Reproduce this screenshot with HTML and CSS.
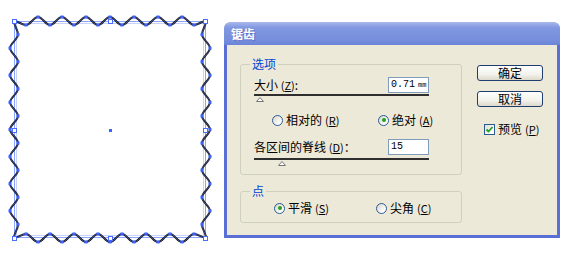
FILE: index.html
```html
<!DOCTYPE html>
<html lang="zh-CN">
<head>
    <meta charset="UTF-8">
    <title>锯齿</title>
    <link rel="stylesheet" href="styles.css">
</head>
<body>

    <svg class="canvas" width="220" height="256" viewBox="0 0 220 256">
        <defs>
            <marker id="anchor" markerWidth="4" markerHeight="4" refX="2" refY="2" markerUnits="userSpaceOnUse">
                <rect x="0.5" y="0.5" width="3" height="3" fill="#3b62ff"/>
            </marker>
            <path id="wave"
                d="M14 21 c4.5 0 7.5 4 12 4 s7.5 -8 12 -8 s7.5 8 12 8 s7.5 -8 12 -8 s7.5 8 12 8 s7.5 -8 12 -8 s7.5 8 12 8 s7.5 -8 12 -8 s7.5 8 12 8 s7.5 -8 12 -8 s7.5 8 12 8 s7.5 -8 12 -8 s7.5 8 12 8 s7.5 -8 12 -8 s7.5 8 12 8 s7.5 -4 12 -4
                   c0 5 -4 8.56 -4 13.56 s8 8.56 8 13.56 s-8 8.56 -8 13.56 s8 8.56 8 13.56 s-8 8.56 -8 13.56 s8 8.56 8 13.56 s-8 8.56 -8 13.56 s8 8.56 8 13.56 s-8 8.56 -8 13.56 s8 8.56 8 13.56 s-8 8.56 -8 13.56 s8 8.56 8 13.56 s-8 8.56 -8 13.56 s8 8.56 8 13.56 s-8 8.56 -8 13.56 s4 8.56 4 13.56
                   c-4.5 0 -7.5 -4 -12 -4 s-7.5 8 -12 8 s-7.5 -8 -12 -8 s-7.5 8 -12 8 s-7.5 -8 -12 -8 s-7.5 8 -12 8 s-7.5 -8 -12 -8 s-7.5 8 -12 8 s-7.5 -8 -12 -8 s-7.5 8 -12 8 s-7.5 -8 -12 -8 s-7.5 8 -12 8 s-7.5 -8 -12 -8 s-7.5 8 -12 8 s-7.5 -8 -12 -8 s-7.5 4 -12 4
                   c0 -5 4 -8.56 4 -13.56 s-8 -8.56 -8 -13.56 s8 -8.56 8 -13.56 s-8 -8.56 -8 -13.56 s8 -8.56 8 -13.56 s-8 -8.56 -8 -13.56 s8 -8.56 8 -13.56 s-8 -8.56 -8 -13.56 s8 -8.56 8 -13.56 s-8 -8.56 -8 -13.56 s8 -8.56 8 -13.56 s-8 -8.56 -8 -13.56 s8 -8.56 8 -13.56 s-8 -8.56 -8 -13.56 s8 -8.56 8 -13.56 s-4 -8.56 -4 -13.56 Z"/>
        </defs>
        <rect x="14.5" y="21.5" width="191" height="216" fill="none" stroke="#8aa4ff"/>
        <rect x="16.5" y="23.5" width="187" height="212" fill="none" stroke="#c8d4ff"/>
        <use href="#wave" fill="none" stroke="#1a1a1a" stroke-width="2"/>
        <use href="#wave" fill="none" stroke="#5577ff" stroke-width="0.5"
            marker-start="url(#anchor)" marker-mid="url(#anchor)"/>
        <g fill="#fff" stroke="#4a6dff">
            <rect x="12.5" y="19.5" width="4" height="4"/>
            <rect x="108.5" y="19.5" width="4" height="4"/>
            <rect x="203.5" y="19.5" width="4" height="4"/>
            <rect x="12.5" y="128.5" width="4" height="4"/>
            <rect x="203.5" y="128.5" width="4" height="4"/>
            <rect x="12.5" y="236.5" width="4" height="4"/>
            <rect x="108.5" y="236.5" width="4" height="4"/>
            <rect x="203.5" y="236.5" width="4" height="4"/>
        </g>
        <rect x="109" y="129" width="3" height="3" fill="#3b62ff"/>
    </svg>

    <div class="dialog">
        <div class="titlebar">锯齿</div>
        <div class="dialog-body">
            <div class="groups">
                <fieldset class="group options">
                    <legend>选项</legend>
                    <div class="field">
                        <span>大小 <span class="key">(<u>Z</u>)</span>:</span>
                        <span class="box">0.71<small>mm</small></span>
                    </div>
                    <div class="slider">
                        <svg class="thumb" width="8" height="5"><polygon points="0.5,4.5 4,0.5 7.5,4.5" fill="#fff" stroke="#777"/></svg>
                    </div>
                    <div class="radios">
                        <span class="radio"><span class="dot"></span>相对的 <span class="key">(<u>R</u>)</span></span>
                        <span class="radio"><span class="dot on"></span>绝对 <span class="key">(<u>A</u>)</span></span>
                    </div>
                    <div class="field second">
                        <span>各区间的脊线 <span class="key">(<u>D</u>)</span>：</span>
                        <span class="box">15</span>
                    </div>
                    <div class="slider second">
                        <svg class="thumb far" width="8" height="5"><polygon points="0.5,4.5 4,0.5 7.5,4.5" fill="#fff" stroke="#777"/></svg>
                    </div>
                </fieldset>

                <fieldset class="group points">
                    <legend>点</legend>
                    <div class="radios">
                        <span class="radio"><span class="dot on"></span>平滑 <span class="key">(<u>S</u>)</span></span>
                        <span class="radio"><span class="dot"></span>尖角 <span class="key">(<u>C</u>)</span></span>
                    </div>
                </fieldset>
            </div>

            <div class="actions">
                <button class="btn">确定</button>
                <button class="btn">取消</button>
                <label class="check">
                    <span class="checkbox">
                        <svg width="9" height="9"><path d="M1.5 4.5 L3.5 6.5 L7.5 2" fill="none" stroke="#21a121" stroke-width="1.8"/></svg>
                    </span>
                    预览 <span class="key">(<u>P</u>)</span>
                </label>
            </div>
        </div>
    </div>

</body>
</html>
```

FILE: styles.css
```css
body {
    margin: 0;
    display: flex;
    align-items: flex-start;
    background-color: #fff;
    color: #000;
    font-family: "Noto Sans CJK SC", "Liberation Sans", sans-serif;
    font-size: 12px;
}

.canvas {
    display: block;
    flex: none;
}

/* dialog window */

.dialog {
    margin: 22px 0 0 4px;
    width: 336px;
    height: 216px;
    display: flex;
    flex-direction: column;
}

.titlebar {
    height: 23px;
    padding-left: 7px;
    border-radius: 6px 6px 0 0;
    background: linear-gradient(#a9b8ec, #8197e0 25%, #778fdc 75%, #6b84d8);
    color: #fff;
    font-weight: bold;
    line-height: 23px;
    text-shadow: 1px 1px 0 #5b6fc9;
    box-sizing: border-box;
}

.dialog-body {
    flex: 1;
    display: flex;
    padding: 12px 0 0 13px;
    background-color: #ece9d8;
    border: 3px solid #5a6fd6;
    border-top: 0;
}

/* group boxes */

.groups {
    width: 222px;
}

.group {
    margin: 0;
    min-width: 0;
    padding: 6px 32px 6px 13px;
    border: 1px solid #d0d0bf;
    border-radius: 3px;
    line-height: 14px;
}

.group legend {
    margin-left: -4px;
    padding: 0 2px;
    color: #0046d5;
    line-height: 14px;
}

.group.points {
    margin-top: 9px;
    padding: 3px 0 7px 13px;
}

.field {
    display: flex;
    justify-content: space-between;
    align-items: center;
    height: 16px;
    white-space: nowrap;
}

.field.second {
    margin-top: 12px;
}

.key {
    font-size: 11px;
}

.box {
    width: 41px;
    height: 16px;
    padding-left: 2px;
    border: 1px solid #7f9db9;
    background-color: #fff;
    font-family: "Liberation Mono", monospace;
    font-size: 10px;
    line-height: 14px;
    white-space: nowrap;
    overflow: hidden;
    box-sizing: border-box;
}

.box small {
    margin-left: 3px;
    font-size: 7px;
}

.slider {
    margin-top: 1px;
    height: 8px;
    border-top: 2px solid #2e2e2e;
}

.slider.second {
    margin-top: 3px;
}

.thumb {
    display: block;
    margin: 1px 0 0 2px;
}

.thumb.far {
    margin-left: 24px;
}

.radios {
    display: grid;
    grid-template-columns: 106px max-content;
    margin-top: 9px;
    padding-left: 18px;
    white-space: nowrap;
}

.points .radios {
    grid-template-columns: 102px max-content;
    margin-top: 0;
    padding-left: 20px;
}

.radio {
    display: inline-flex;
    align-items: center;
    gap: 3px;
}

.dot {
    width: 11px;
    height: 11px;
    border: 1px solid #2c5b95;
    border-radius: 50%;
    background: linear-gradient(135deg, #d8d5c6, #fff 80%);
    box-sizing: border-box;
    display: flex;
    align-items: center;
    justify-content: center;
}

.dot.on::after {
    content: "";
    width: 4px;
    height: 4px;
    border-radius: 50%;
    background-color: #21a121;
}

/* buttons column */

.actions {
    margin-left: 15px;
    padding-top: 8px;
    display: flex;
    flex-direction: column;
    align-items: flex-start;
}

.btn {
    width: 66px;
    height: 16px;
    margin: 0 0 10px 0;
    padding: 0;
    border: 1px solid #1f3d6e;
    border-radius: 3px;
    background: linear-gradient(#fff, #f3f2ec 60%, #dcd8ca);
    font-family: inherit;
    font-size: 12px;
    line-height: 14px;
    color: #000;
}

.check {
    display: flex;
    align-items: center;
    gap: 3px;
    margin: 5px 0 0 7px;
    line-height: 14px;
}

.checkbox {
    width: 11px;
    height: 11px;
    border: 1px solid #2c5b95;
    background: linear-gradient(135deg, #e0ded2, #fff 80%);
    box-sizing: border-box;
    display: flex;
    align-items: center;
    justify-content: center;
}
```
